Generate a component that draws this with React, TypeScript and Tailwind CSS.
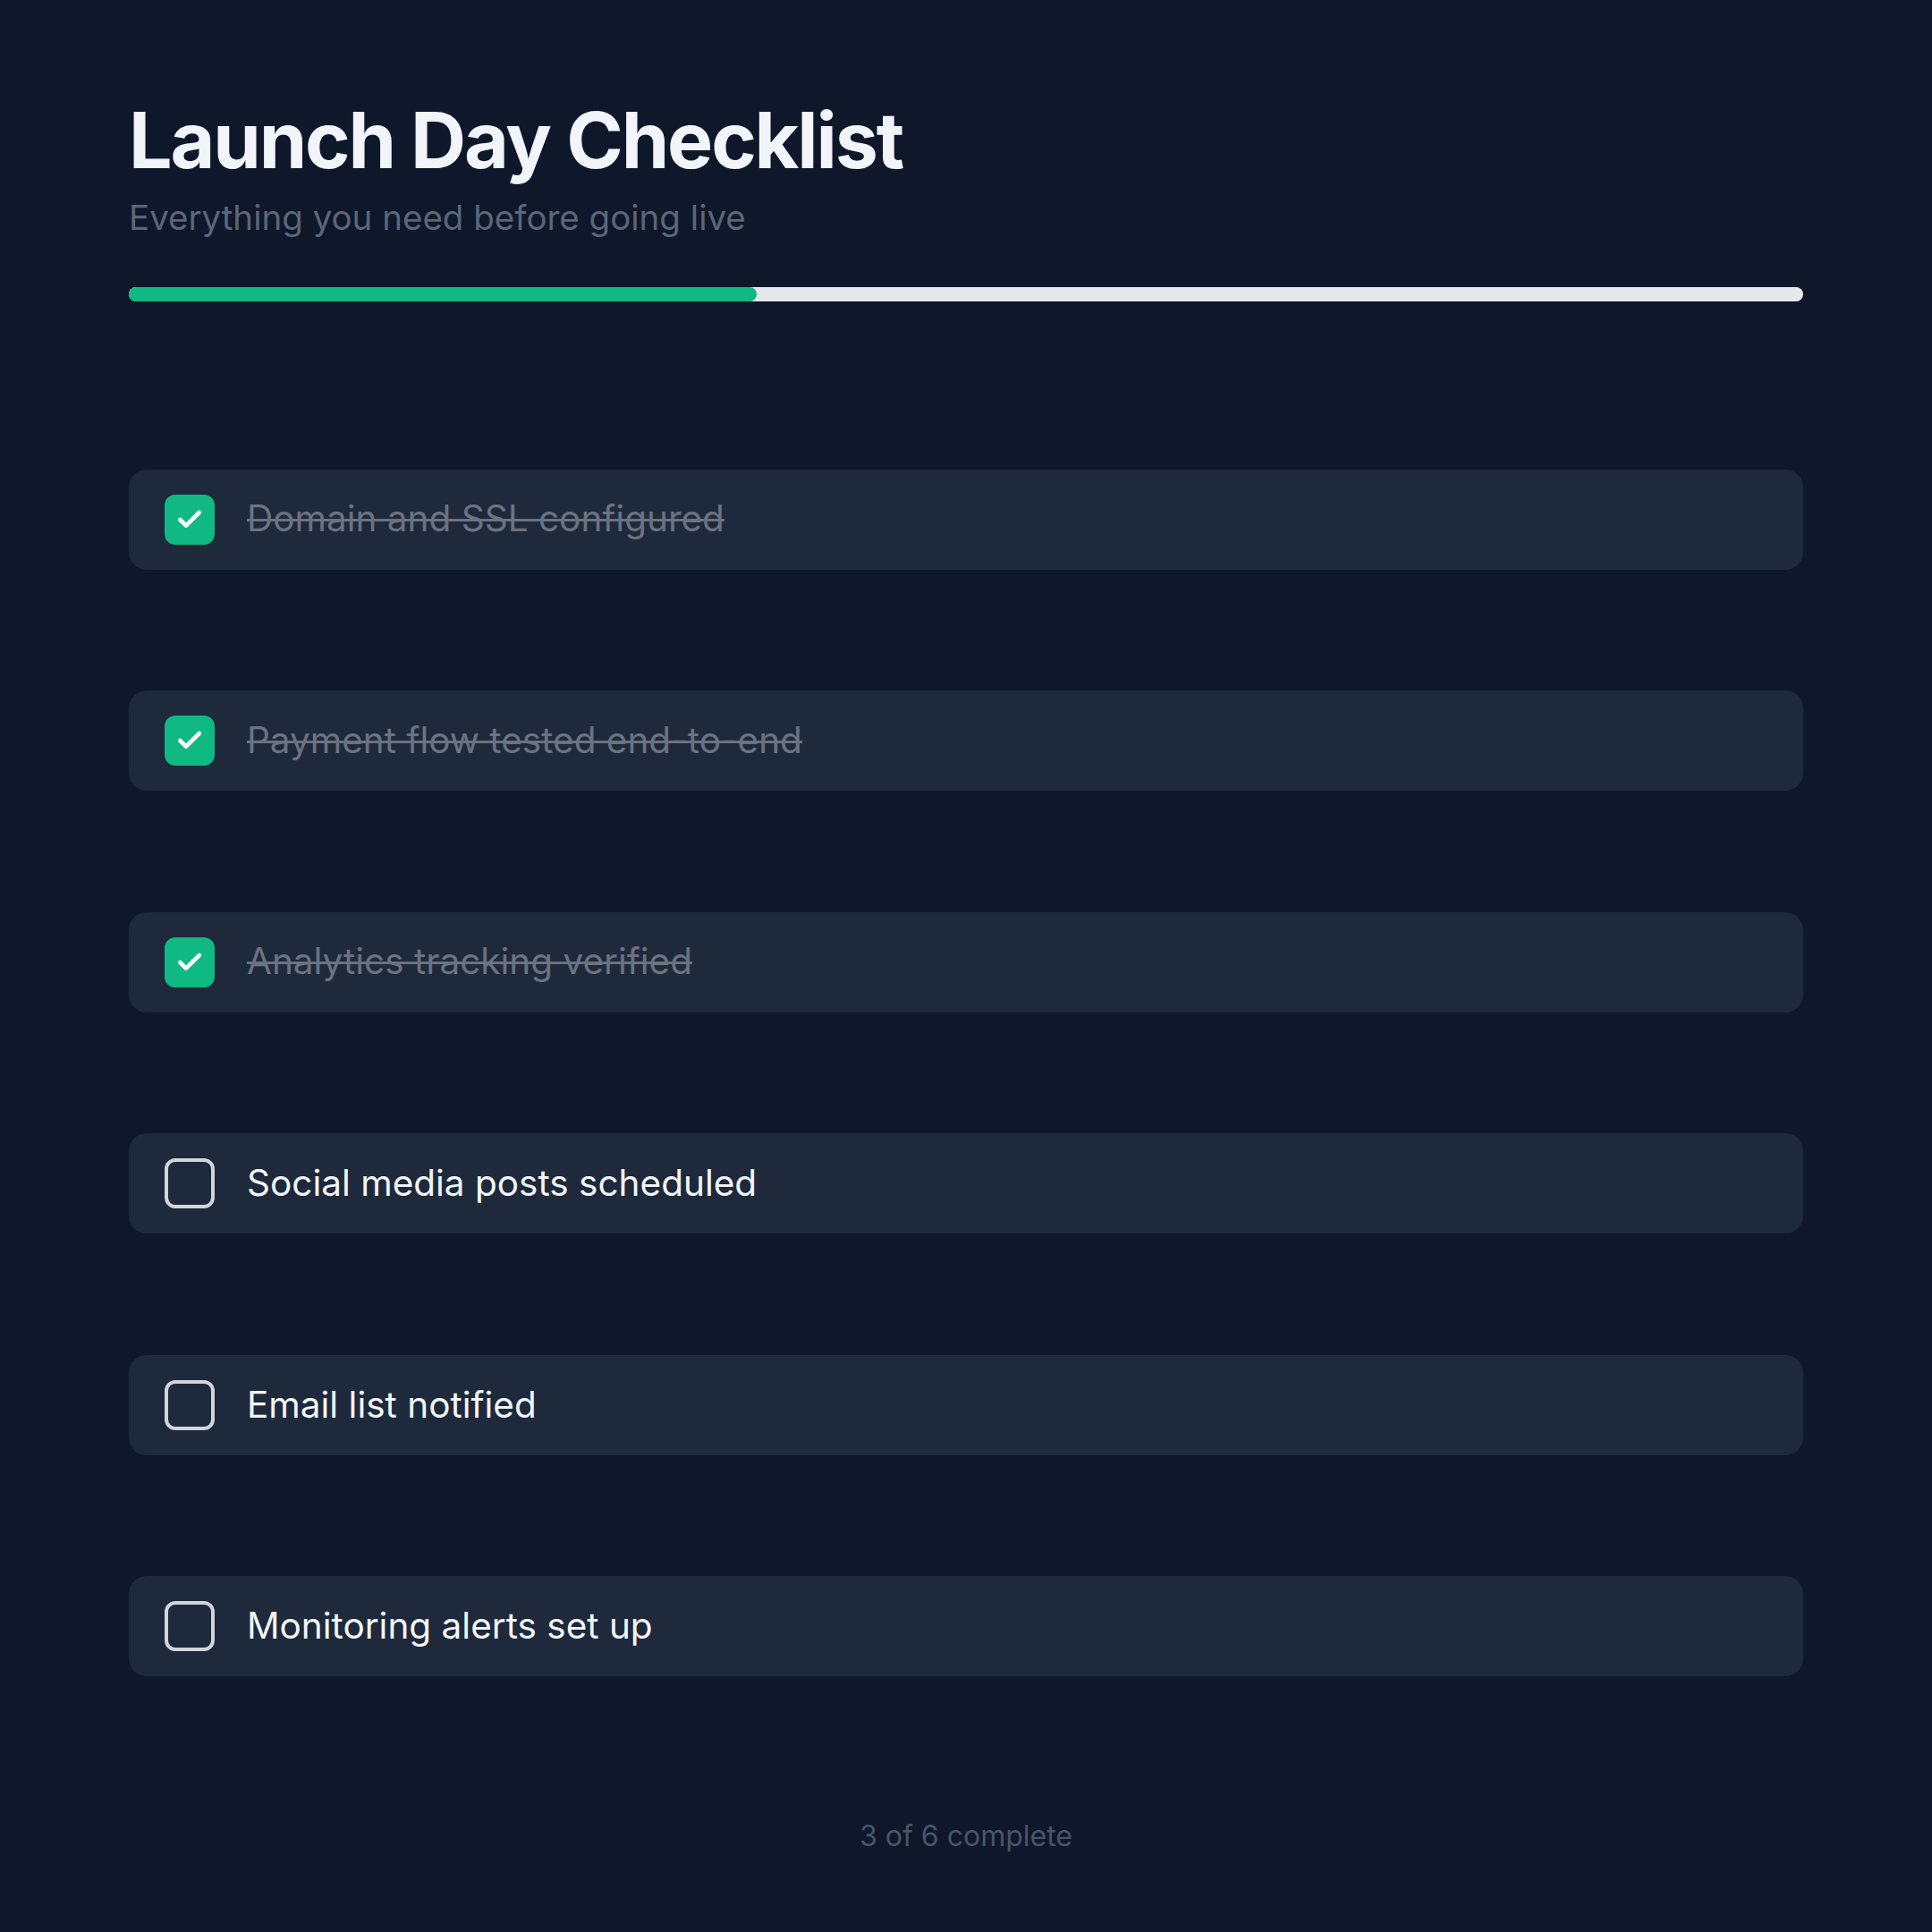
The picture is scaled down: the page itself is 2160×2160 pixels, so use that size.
import { Check } from "lucide-react";

const ITEMS = [
  { label: "Domain and SSL configured", done: true },
  { label: "Payment flow tested end-to-end", done: true },
  { label: "Analytics tracking verified", done: true },
  { label: "Social media posts scheduled", done: false },
  { label: "Email list notified", done: false },
  { label: "Monitoring alerts set up", done: false },
];

function ChecklistRow({ label, done }: { label: string; done: boolean }) {
  return (
    <li className="flex h-[112px] items-center gap-9 rounded-[20px] bg-[#1e293b] px-10">
      {done ? (
        <span className="flex h-14 w-14 shrink-0 items-center justify-center rounded-xl bg-[#10b981]">
          <Check size={32} strokeWidth={3.5} className="text-white" />
        </span>
      ) : (
        <span className="h-14 w-14 shrink-0 rounded-xl border-4 border-[#d1d5db]" />
      )}
      <span
        className={
          done
            ? "text-[40.5px] leading-none text-[#6b7280] line-through decoration-[#6b7280] decoration-[3px]"
            : "text-[40.5px] leading-none text-[#f1f5f9]"
        }
      >
        {label}
      </span>
    </li>
  );
}

export default function App() {
  const doneCount = ITEMS.filter((i) => i.done).length;

  return (
    <div className="min-h-screen w-full bg-[#0f172a] px-[144px] pt-[114px] font-['Inter',sans-serif]">
      {/* Header */}
      <h1 className="text-[86px] font-bold leading-none tracking-tight text-[#f1f5f9]">
        Launch Day Checklist
      </h1>
      <p className="mt-[24px] text-[38.5px] leading-none text-[#5b6678]">
        Everything you need before going live
      </p>

      {/* Progress */}
      <div className="mt-[58px] h-4 w-full rounded-full bg-[#e5e7eb]">
        <div className="h-4 w-[37.5%] rounded-full bg-[#10b981]" />
      </div>

      {/* Items */}
      <ul className="mt-[188px] flex flex-col gap-[135.6px]">
        {ITEMS.map((item) => (
          <ChecklistRow key={item.label} label={item.label} done={item.done} />
        ))}
      </ul>

      <p className="mt-[163px] text-center text-[32px] leading-none text-[#475569]">
        {doneCount} of {ITEMS.length} complete
      </p>
    </div>
  );
}
